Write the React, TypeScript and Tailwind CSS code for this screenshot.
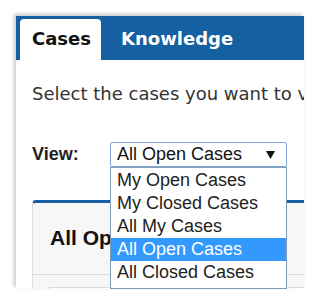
const options = ["My Open Cases", "My Closed Cases", "All My Cases", "All Open Cases", "All Closed Cases"];

const App = () => {
    const selected = "All Open Cases";

    return (
        <div className="w-[318px] h-[306px] bg-white pt-4 pl-4">
            <div className="relative w-[288px] h-[273px] overflow-hidden bg-white shadow-[-2px_-2px_4px_rgba(0,0,0,0.22)]">
                {/* tab bar */}
                <div className="flex items-end h-[44px] bg-[#1460a0] pl-1 font-['DejaVu_Sans',sans-serif] font-bold text-[18px] leading-[22px]">
                    <div className="h-[41px] w-[81px] rounded-t-[4px] bg-white pl-3 pt-[9px] text-[#111]">Cases</div>
                    <div className="h-[41px] ml-5 pt-[9px] text-white">Knowledge</div>
                </div>

                <p className="mt-[23px] pl-4 whitespace-nowrap font-['DejaVu_Sans',sans-serif] text-[18px] leading-[22px] text-[#333]">
                    Select the cases you want to view
                </p>

                {/* view picker */}
                <div className="flex items-center h-[25px] mt-[37px] pl-4 font-['Liberation_Sans',Arial,sans-serif]">
                    <span className="w-[78px] font-bold text-[18px] text-[#222]">View:</span>
                    <div className="flex items-center justify-between w-[177px] h-[25px] border border-[#7fa6d8] rounded-[2px] pl-[6px] pr-[11px] text-[18px] text-[#111]">
                        <span>{selected}</span>
                        <svg width="9" height="8" viewBox="0 0 9 8">
                            <path d="M0 0 H9 L4.5 8 Z" fill="#111" />
                        </svg>
                    </div>
                </div>

                {/* panel behind the list */}
                <div className="mt-[33px] ml-4 border-t-[3px] border-t-[#1460a0] border-l border-l-[#dedede] rounded-tl-[4px] bg-[#f7f7f7]">
                    <div className="h-[72px] pt-[23px] pl-[17px] border-b border-[#dcdcdc] font-['Liberation_Sans',Arial,sans-serif] font-bold text-[21px] leading-[24px] text-[#111]">
                        All Open Cases
                    </div>
                    <div className="mt-[12px] ml-4 h-10 border-t border-l border-[#dcdcdc] bg-white" />
                </div>

                {/* open dropdown list */}
                <ul className="absolute left-[94px] top-[151px] w-[177px] h-[122px] border border-[#7f9db9] bg-white pt-[1px] font-['Liberation_Sans',Arial,sans-serif] text-[18px] leading-[23px]">
                    {options.map((o) => (
                        <li
                            key={o}
                            className={o === selected ? "h-[23px] pl-[6px] bg-[#3399ff] text-white" : "h-[23px] pl-[6px] text-[#222]"}
                        >
                            {o}
                        </li>
                    ))}
                </ul>
            </div>
        </div>
    );
};

export default App;
